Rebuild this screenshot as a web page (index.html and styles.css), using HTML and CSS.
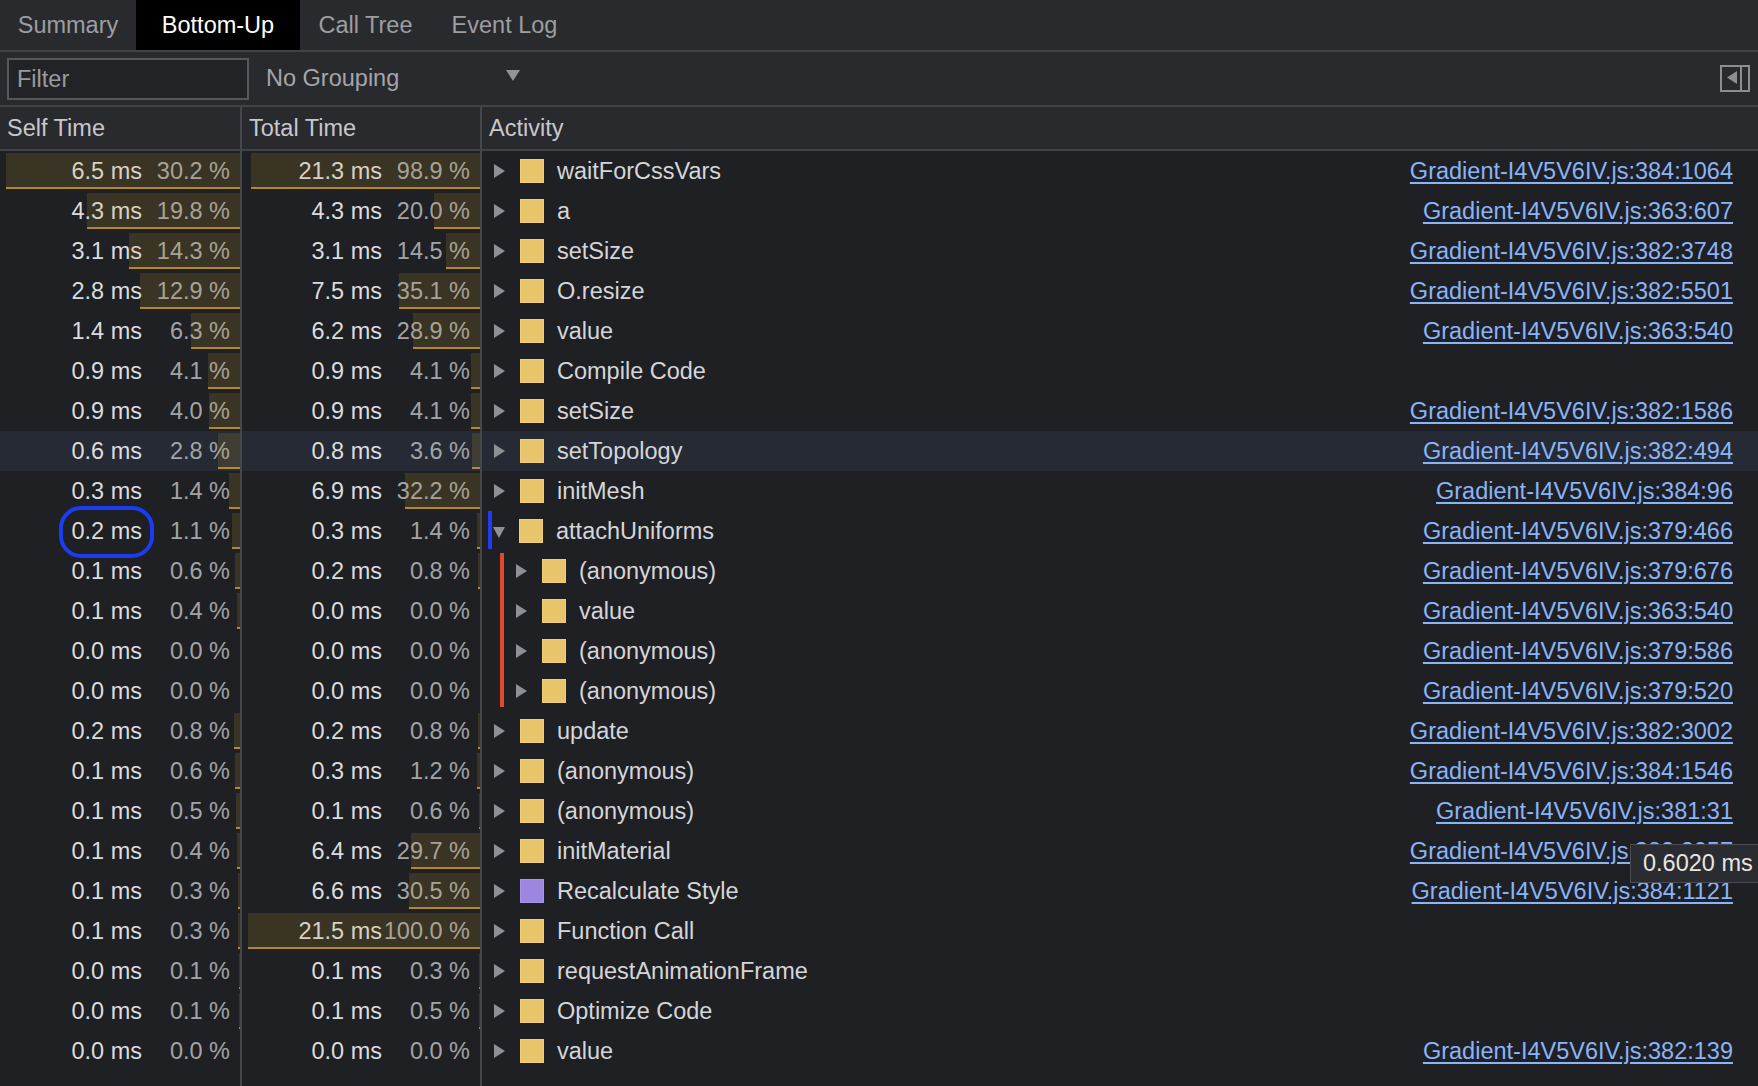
FILE: index.html
```html
<!DOCTYPE html>
<html>
<head>
<meta charset="utf-8">
<link rel="stylesheet" href="styles.css">
</head>
<body>
<div class="app">
  <div class="tabs">
    <div class="tab t1">Summary</div>
    <div class="tab t2 active">Bottom-Up</div>
    <div class="tab t3">Call Tree</div>
    <div class="tab t4">Event Log</div>
  </div>
  <div class="toolbar">
    <div class="filter">Filter</div>
    <div class="select"><span>No Grouping</span><span class="caret"></span></div>
    <div class="sidebtn">
      <svg width="30" height="27" viewBox="0 0 30 27"><rect x="1" y="1" width="28" height="25" fill="none" stroke="#8d8e91" stroke-width="2"/><line x1="21" y1="1" x2="21" y2="26" stroke="#8d8e91" stroke-width="2"/><polygon points="7,12.5 17,6 17,19" fill="#8d8e91"/></svg>
    </div>
  </div>
  <div class="head">
    <div class="hcell">Self Time</div>
    <div class="hcell">Total Time</div>
    <div class="hcell last">Activity</div>
  </div>
  <div class="rows">
    <div class="row">
      <div class="cell time"><span class="ms">6.5 ms</span><span class="pct">30.2 %</span><span class="bar" style="width:234px"></span></div>
      <div class="cell time"><span class="ms">21.3 ms</span><span class="pct">98.9 %</span><span class="bar" style="width:229.4px"></span></div>
      <div class="cell act"><span class="tri"></span><span class="sq"></span><span class="name">waitForCssVars</span><span class="link">Gradient-I4V5V6IV.js:384:1064</span></div>
    </div>
    <div class="row">
      <div class="cell time"><span class="ms">4.3 ms</span><span class="pct">19.8 %</span><span class="bar" style="width:153.4px"></span></div>
      <div class="cell time"><span class="ms">4.3 ms</span><span class="pct">20.0 %</span><span class="bar" style="width:46.4px"></span></div>
      <div class="cell act"><span class="tri"></span><span class="sq"></span><span class="name">a</span><span class="link">Gradient-I4V5V6IV.js:363:607</span></div>
    </div>
    <div class="row">
      <div class="cell time"><span class="ms">3.1 ms</span><span class="pct">14.3 %</span><span class="bar" style="width:110.8px"></span></div>
      <div class="cell time"><span class="ms">3.1 ms</span><span class="pct">14.5 %</span><span class="bar" style="width:33.6px"></span></div>
      <div class="cell act"><span class="tri"></span><span class="sq"></span><span class="name">setSize</span><span class="link">Gradient-I4V5V6IV.js:382:3748</span></div>
    </div>
    <div class="row">
      <div class="cell time"><span class="ms">2.8 ms</span><span class="pct">12.9 %</span><span class="bar" style="width:99.9px"></span></div>
      <div class="cell time"><span class="ms">7.5 ms</span><span class="pct">35.1 %</span><span class="bar" style="width:81.4px"></span></div>
      <div class="cell act"><span class="tri"></span><span class="sq"></span><span class="name">O.resize</span><span class="link">Gradient-I4V5V6IV.js:382:5501</span></div>
    </div>
    <div class="row">
      <div class="cell time"><span class="ms">1.4 ms</span><span class="pct">6.3 %</span><span class="bar" style="width:48.8px"></span></div>
      <div class="cell time"><span class="ms">6.2 ms</span><span class="pct">28.9 %</span><span class="bar" style="width:67px"></span></div>
      <div class="cell act"><span class="tri"></span><span class="sq"></span><span class="name">value</span><span class="link">Gradient-I4V5V6IV.js:363:540</span></div>
    </div>
    <div class="row">
      <div class="cell time"><span class="ms">0.9 ms</span><span class="pct">4.1 %</span><span class="bar" style="width:31.8px"></span></div>
      <div class="cell time"><span class="ms">0.9 ms</span><span class="pct">4.1 %</span><span class="bar" style="width:9.5px"></span></div>
      <div class="cell act"><span class="tri"></span><span class="sq"></span><span class="name">Compile Code</span></div>
    </div>
    <div class="row">
      <div class="cell time"><span class="ms">0.9 ms</span><span class="pct">4.0 %</span><span class="bar" style="width:31px"></span></div>
      <div class="cell time"><span class="ms">0.9 ms</span><span class="pct">4.1 %</span><span class="bar" style="width:9.5px"></span></div>
      <div class="cell act"><span class="tri"></span><span class="sq"></span><span class="name">setSize</span><span class="link">Gradient-I4V5V6IV.js:382:1586</span></div>
    </div>
    <div class="row sel">
      <div class="cell time"><span class="ms">0.6 ms</span><span class="pct">2.8 %</span><span class="bar" style="width:21.7px"></span></div>
      <div class="cell time"><span class="ms">0.8 ms</span><span class="pct">3.6 %</span><span class="bar" style="width:8.4px"></span></div>
      <div class="cell act"><span class="tri"></span><span class="sq"></span><span class="name">setTopology</span><span class="link">Gradient-I4V5V6IV.js:382:494</span></div>
    </div>
    <div class="row">
      <div class="cell time"><span class="ms">0.3 ms</span><span class="pct">1.4 %</span><span class="bar" style="width:10.8px"></span></div>
      <div class="cell time"><span class="ms">6.9 ms</span><span class="pct">32.2 %</span><span class="bar" style="width:74.7px"></span></div>
      <div class="cell act"><span class="tri"></span><span class="sq"></span><span class="name">initMesh</span><span class="link">Gradient-I4V5V6IV.js:384:96</span></div>
    </div>
    <div class="row">
      <div class="cell time"><span class="ms">0.2 ms</span><span class="pct">1.1 %</span><span class="bar" style="width:8.5px"></span><span class="ring"></span></div>
      <div class="cell time"><span class="ms">0.3 ms</span><span class="pct">1.4 %</span><span class="bar" style="width:3.2px"></span></div>
      <div class="cell act"><span class="mark"></span><span class="tri down"></span><span class="sq"></span><span class="name">attachUniforms</span><span class="link">Gradient-I4V5V6IV.js:379:466</span></div>
    </div>
    <div class="row">
      <div class="cell time"><span class="ms">0.1 ms</span><span class="pct">0.6 %</span><span class="bar" style="width:4.6px"></span></div>
      <div class="cell time"><span class="ms">0.2 ms</span><span class="pct">0.8 %</span><span class="bar" style="width:1.9px"></span></div>
      <div class="cell act child"><span class="guide first"></span><span class="tri"></span><span class="sq"></span><span class="name">(anonymous)</span><span class="link">Gradient-I4V5V6IV.js:379:676</span></div>
    </div>
    <div class="row">
      <div class="cell time"><span class="ms">0.1 ms</span><span class="pct">0.4 %</span><span class="bar" style="width:3.1px"></span></div>
      <div class="cell time"><span class="ms">0.0 ms</span><span class="pct">0.0 %</span></div>
      <div class="cell act child"><span class="guide"></span><span class="tri"></span><span class="sq"></span><span class="name">value</span><span class="link">Gradient-I4V5V6IV.js:363:540</span></div>
    </div>
    <div class="row">
      <div class="cell time"><span class="ms">0.0 ms</span><span class="pct">0.0 %</span></div>
      <div class="cell time"><span class="ms">0.0 ms</span><span class="pct">0.0 %</span></div>
      <div class="cell act child"><span class="guide"></span><span class="tri"></span><span class="sq"></span><span class="name">(anonymous)</span><span class="link">Gradient-I4V5V6IV.js:379:586</span></div>
    </div>
    <div class="row">
      <div class="cell time"><span class="ms">0.0 ms</span><span class="pct">0.0 %</span></div>
      <div class="cell time"><span class="ms">0.0 ms</span><span class="pct">0.0 %</span></div>
      <div class="cell act child"><span class="guide last"></span><span class="tri"></span><span class="sq"></span><span class="name">(anonymous)</span><span class="link">Gradient-I4V5V6IV.js:379:520</span></div>
    </div>
    <div class="row">
      <div class="cell time"><span class="ms">0.2 ms</span><span class="pct">0.8 %</span><span class="bar" style="width:6.2px"></span></div>
      <div class="cell time"><span class="ms">0.2 ms</span><span class="pct">0.8 %</span><span class="bar" style="width:1.9px"></span></div>
      <div class="cell act"><span class="tri"></span><span class="sq"></span><span class="name">update</span><span class="link">Gradient-I4V5V6IV.js:382:3002</span></div>
    </div>
    <div class="row">
      <div class="cell time"><span class="ms">0.1 ms</span><span class="pct">0.6 %</span><span class="bar" style="width:4.6px"></span></div>
      <div class="cell time"><span class="ms">0.3 ms</span><span class="pct">1.2 %</span><span class="bar" style="width:2.8px"></span></div>
      <div class="cell act"><span class="tri"></span><span class="sq"></span><span class="name">(anonymous)</span><span class="link">Gradient-I4V5V6IV.js:384:1546</span></div>
    </div>
    <div class="row">
      <div class="cell time"><span class="ms">0.1 ms</span><span class="pct">0.5 %</span><span class="bar" style="width:3.9px"></span></div>
      <div class="cell time"><span class="ms">0.1 ms</span><span class="pct">0.6 %</span><span class="bar" style="width:1.4px"></span></div>
      <div class="cell act"><span class="tri"></span><span class="sq"></span><span class="name">(anonymous)</span><span class="link">Gradient-I4V5V6IV.js:381:31</span></div>
    </div>
    <div class="row">
      <div class="cell time"><span class="ms">0.1 ms</span><span class="pct">0.4 %</span><span class="bar" style="width:3.1px"></span></div>
      <div class="cell time"><span class="ms">6.4 ms</span><span class="pct">29.7 %</span><span class="bar" style="width:68.9px"></span></div>
      <div class="cell act"><span class="tri"></span><span class="sq"></span><span class="name">initMaterial</span><span class="link">Gradient-I4V5V6IV.js:382:2057</span><span class="tooltip">0.6020 ms</span></div>
    </div>
    <div class="row">
      <div class="cell time"><span class="ms">0.1 ms</span><span class="pct">0.3 %</span><span class="bar" style="width:2.3px"></span></div>
      <div class="cell time"><span class="ms">6.6 ms</span><span class="pct">30.5 %</span><span class="bar" style="width:70.8px"></span></div>
      <div class="cell act"><span class="tri"></span><span class="sq purple"></span><span class="name">Recalculate Style</span><span class="link">Gradient-I4V5V6IV.js:384:1121</span></div>
    </div>
    <div class="row">
      <div class="cell time"><span class="ms">0.1 ms</span><span class="pct">0.3 %</span><span class="bar" style="width:2.3px"></span></div>
      <div class="cell time"><span class="ms">21.5 ms</span><span class="pct">100.0 %</span><span class="bar" style="width:232px"></span></div>
      <div class="cell act"><span class="tri"></span><span class="sq"></span><span class="name">Function Call</span></div>
    </div>
    <div class="row">
      <div class="cell time"><span class="ms">0.0 ms</span><span class="pct">0.1 %</span><span class="bar" style="width:0.8px"></span></div>
      <div class="cell time"><span class="ms">0.1 ms</span><span class="pct">0.3 %</span><span class="bar" style="width:0.7px"></span></div>
      <div class="cell act"><span class="tri"></span><span class="sq"></span><span class="name">requestAnimationFrame</span></div>
    </div>
    <div class="row">
      <div class="cell time"><span class="ms">0.0 ms</span><span class="pct">0.1 %</span><span class="bar" style="width:0.8px"></span></div>
      <div class="cell time"><span class="ms">0.1 ms</span><span class="pct">0.5 %</span><span class="bar" style="width:1.2px"></span></div>
      <div class="cell act"><span class="tri"></span><span class="sq"></span><span class="name">Optimize Code</span></div>
    </div>
    <div class="row">
      <div class="cell time"><span class="ms">0.0 ms</span><span class="pct">0.0 %</span></div>
      <div class="cell time"><span class="ms">0.0 ms</span><span class="pct">0.0 %</span></div>
      <div class="cell act"><span class="tri"></span><span class="sq"></span><span class="name">value</span><span class="link">Gradient-I4V5V6IV.js:382:139</span></div>
    </div>
    <div class="row filler">
      <div class="cell time"></div>
      <div class="cell time"></div>
      <div class="cell act"></div>
    </div>
  </div>
</div>
</body>
</html>
```
FILE: styles.css
```css
html, body {
  margin: 0;
  padding: 0;
  height: 100%;
  overflow: hidden;
  background: #1f2023;
}
body {
  font-family: "Liberation Sans", Arial, sans-serif;
  font-size: 23.5px;
  color: #d6d8dc;
}
.app {
  display: flex;
  flex-direction: column;
  height: 100vh;
}
.tabs {
  display: flex;
  height: 50px;
  background: #292a2e;
  border-bottom: 2px solid #424347;
  flex: none;
}
.tab {
  line-height: 50px;
  text-align: center;
  color: #9c9ea2;
}
.t1 { width: 136px; }
.t2 { width: 164px; }
.t3 { width: 131px; }
.t4 { width: 147px; }
.tab.active {
  background: #000;
  color: #fff;
}
.toolbar {
  display: flex;
  align-items: center;
  height: 53px;
  background: #292a2e;
  border-bottom: 2px solid #424347;
  flex: none;
}
.filter {
  box-sizing: border-box;
  margin-left: 7px;
  width: 242px;
  height: 42px;
  border: 2px solid #57585c;
  background: #222326;
  color: #9a9b9f;
  padding-left: 8px;
  line-height: 38px;
}
.select {
  margin-left: 17px;
  width: 254px;
  display: flex;
  justify-content: space-between;
  align-items: center;
  color: #a4a6a9;
}
.caret {
  width: 0;
  height: 0;
  border-left: 7px solid transparent;
  border-right: 7px solid transparent;
  border-top: 11px solid #939497;
  margin-top: -6px;
}
.sidebtn {
  margin-left: auto;
  margin-right: 8px;
  display: flex;
}
.head {
  display: grid;
  grid-template-columns: 242px 240px 1fr;
  height: 42px;
  background: #292a2e;
  border-bottom: 2px solid #424347;
  flex: none;
}
.hcell {
  border-right: 2px solid #46474b;
  padding-left: 7px;
  line-height: 42px;
  color: #c6c8cc;
}
.hcell.last { border-right: none; }
.rows {
  flex: 1;
  display: flex;
  flex-direction: column;
}
.row {
  display: grid;
  grid-template-columns: 242px 240px 1fr;
  height: 40px;
  line-height: 40px;
  flex: none;
}
.row.sel { background: #262a34; }
.row.filler { flex: 1; }
.cell { position: relative; }
.time {
  border-right: 2px solid #46474b;
  display: flex;
  justify-content: flex-end;
  padding-right: 10px;
}
.ms { color: #dadcdf; white-space: nowrap; }
.pct {
  width: 88px;
  text-align: right;
  color: #a2a4a8;
  white-space: nowrap;
}
.bar {
  position: absolute;
  right: 0;
  top: 2px;
  height: 34px;
  background: rgba(200, 160, 50, 0.16);
  border-bottom: 2px solid #b3892a;
}
.ring {
  position: absolute;
  box-sizing: border-box;
  left: 59px;
  top: -5px;
  width: 95px;
  height: 52px;
  border: 4px solid #1b3cf2;
  border-radius: 22px;
}
.act {
  display: flex;
  align-items: center;
  padding-left: 12px;
  white-space: nowrap;
}
.act.child { padding-left: 34px; }
.tri {
  width: 0;
  height: 0;
  border-top: 7px solid transparent;
  border-bottom: 7px solid transparent;
  border-left: 11px solid #8e9096;
  margin-right: 15px;
  flex: none;
}
.tri.down {
  border-left: 6.5px solid transparent;
  border-right: 6.5px solid transparent;
  border-top: 11px solid #8e9096;
  border-bottom: none;
  margin-left: -1px;
  margin-right: 14px;
  margin-top: 2px;
}
.sq {
  width: 24px;
  height: 24px;
  box-sizing: border-box;
  background: #e8c46a;
  border: 1px solid #efcd7a;
  margin-right: 13px;
  flex: none;
}
.sq.purple {
  background: #9c86e0;
  border-color: #a894e8;
}
.name { color: #d4d6da; }
.link {
  margin-left: auto;
  margin-right: 25px;
  color: #8ab4f8;
  text-decoration: underline;
  text-underline-offset: 3px;
  text-decoration-thickness: 1.5px;
}
.mark {
  position: absolute;
  left: 6px;
  top: 0;
  width: 4px;
  height: 38px;
  background: #1f3cf5;
}
.guide {
  position: absolute;
  left: 18px;
  top: 0;
  bottom: 0;
  width: 4px;
  background: #e5472b;
}
.guide.first { top: 2px; }
.guide.last { bottom: 4px; }
.tooltip {
  position: absolute;
  box-sizing: border-box;
  left: 1148px;
  top: 13px;
  width: 150px;
  height: 39px;
  line-height: 37px;
  padding-left: 12px;
  background: #2a2c31;
  border: 1px solid #4a4c52;
  color: #e6e6e6;
  z-index: 5;
}
```
